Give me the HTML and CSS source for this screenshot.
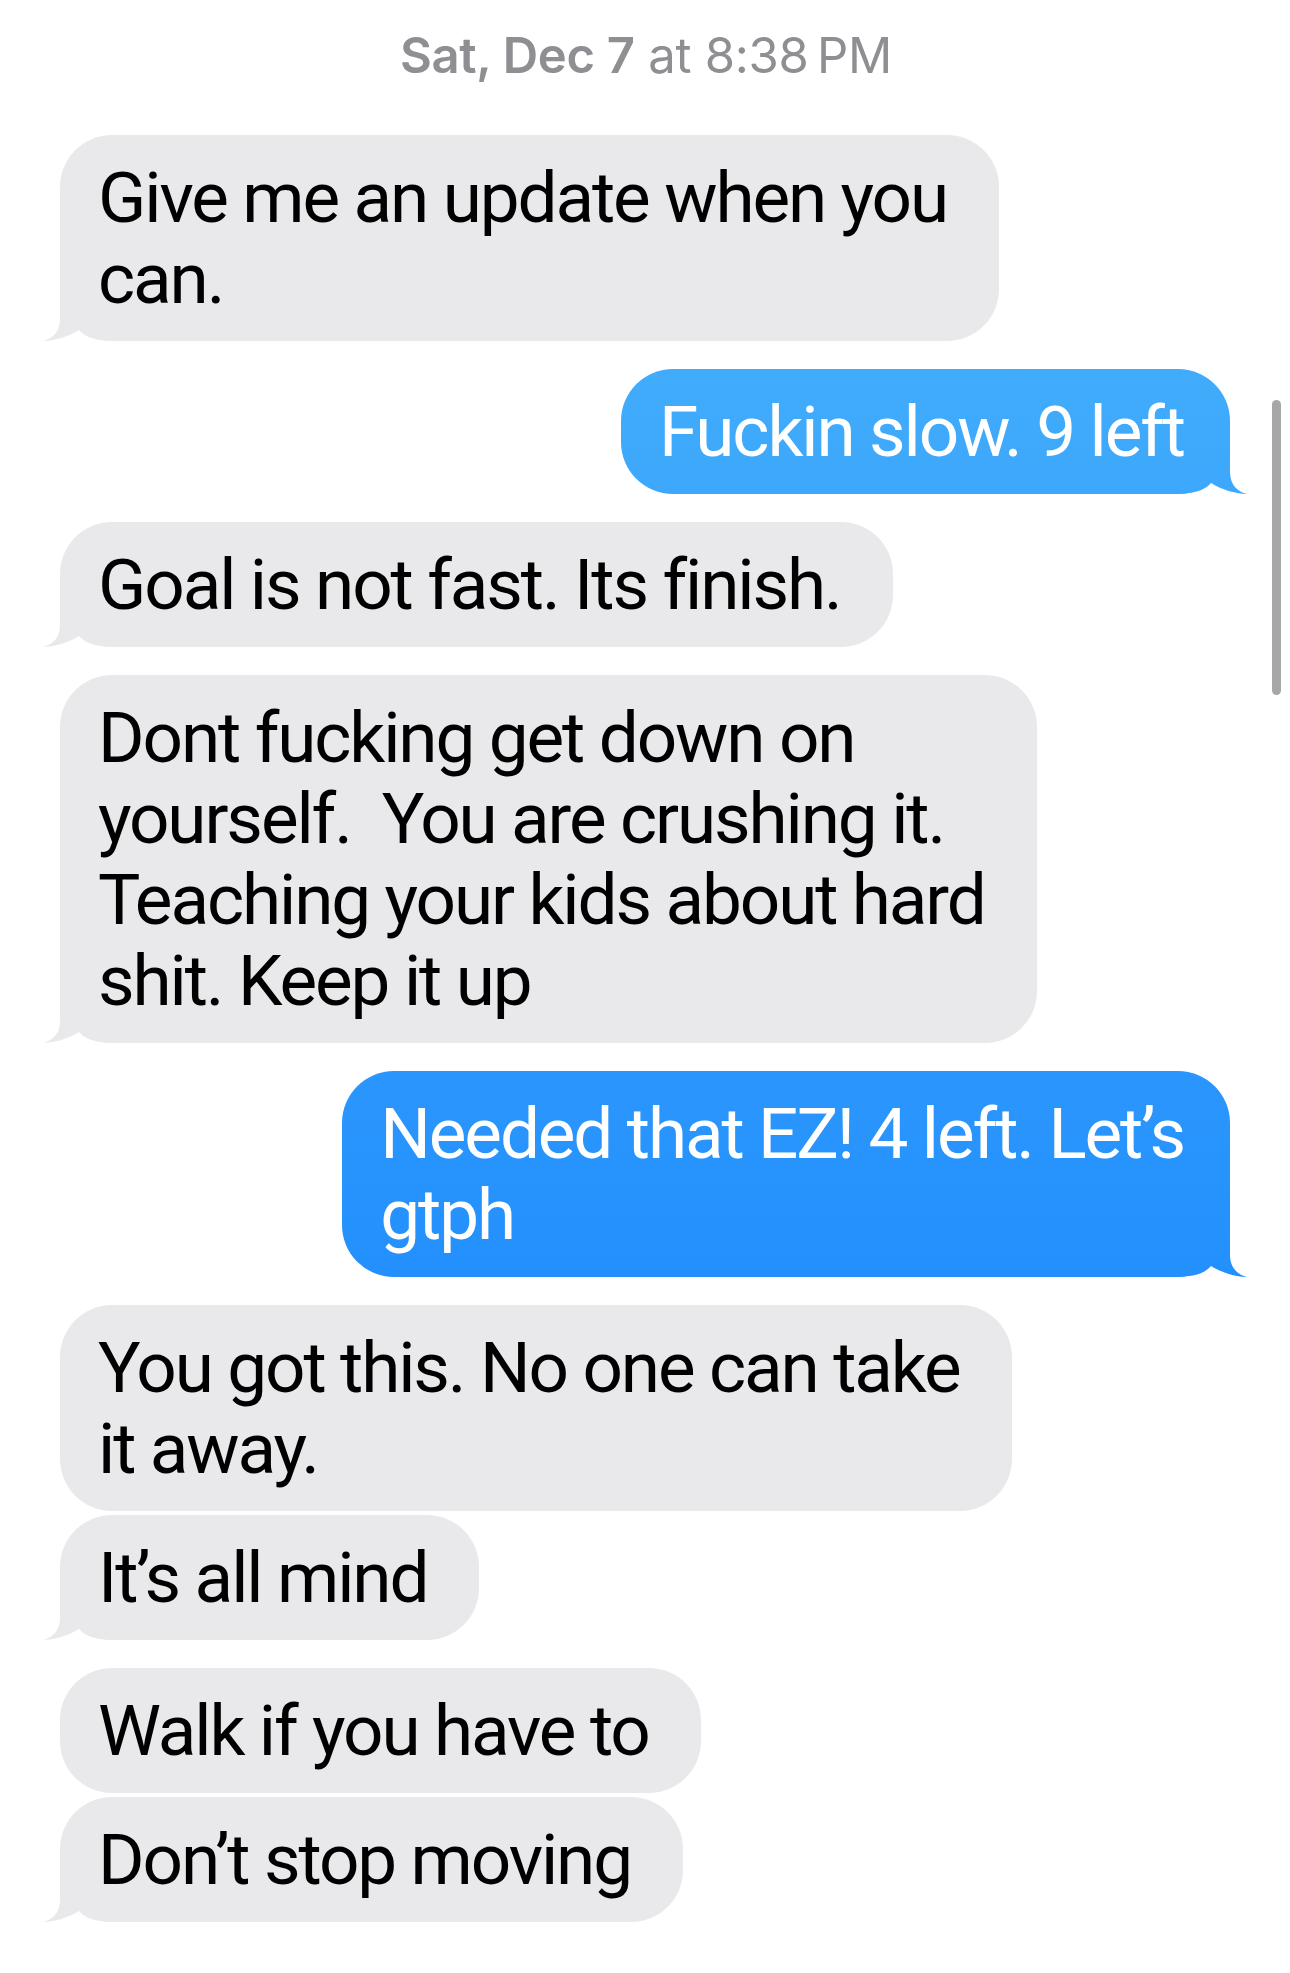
FILE: index.html
```html
<!DOCTYPE html>
<html lang="en">
<head>
<meta charset="utf-8">
<title>Messages</title>
<link rel="stylesheet" href="styles.css">
</head>
<body>
<main class="thread">
  <div class="stamp"><span class="stamp-day">Sat, Dec 7</span> at 8:38&#8239;PM</div>

  <div class="bubble in tailed">Give me an update when you<br>can.<span class="tail"></span></div>
  <div class="bubble out tailed">Fuckin slow. 9 left<span class="tail"></span></div>
  <div class="bubble in tailed">Goal is not fast. Its finish.<span class="tail"></span></div>
  <div class="bubble in tailed">Dont fucking get down on<br>yourself.&nbsp; You are crushing it.<br>Teaching your kids about hard<br>shit. Keep it up<span class="tail"></span></div>
  <div class="bubble out tailed">Needed that EZ! 4 left. Let’s<br>gtph<span class="tail"></span></div>
  <div class="bubble in">You got this. No one can take<br>it away.</div>
  <div class="bubble in tailed cont">It’s all mind<span class="tail"></span></div>
  <div class="bubble in">Walk if you have to</div>
  <div class="bubble in tailed cont">Don’t stop moving<span class="tail"></span></div>

  <div class="scroll-indicator"></div>
</main>
</body>
</html>
```
FILE: styles.css
```css
html, body {
  margin: 0;
  padding: 0;
  background: #ffffff;
}

.thread {
  position: relative;
  width: 1290px;
  height: 1973px;
  box-sizing: border-box;
  padding-top: 26px;
  display: flex;
  flex-direction: column;
  font-family: Inter, "Noto Sans", sans-serif;
  overflow: hidden;
}

.stamp {
  align-self: center;
  font-size: 49px;
  line-height: 60px;
  color: #8e8e93;
  font-weight: 400;
  letter-spacing: -0.3px;
  margin-bottom: 49px;
  padding-left: 2px;
}

.stamp-day {
  font-weight: 600;
}

.bubble {
  position: relative;
  z-index: 0;
  font-family: Roboto, Inter, sans-serif;
  font-size: 71px;
  line-height: 81px;
  padding: 22px 52px 22px 38px;
  border-radius: 52px;
  white-space: nowrap;
  letter-spacing: -2.1px;
}

.bubble + .bubble {
  margin-top: 28px;
}

.bubble + .bubble.cont {
  margin-top: 4px;
}

.in {
  align-self: flex-start;
  margin-left: 60px;
  background: #e9e9eb;
  color: #000000;
}

.out {
  align-self: flex-end;
  margin-right: 60px;
  padding-right: 46px;
  color: #ffffff;
  background: linear-gradient(to bottom, #4db6fb 0px, #0d7bfe 1973px);
  background-attachment: fixed;
}

.tail {
  position: absolute;
  z-index: -1;
  bottom: 0;
  width: 77px;
  height: 60px;
}

.in .tail {
  left: -17px;
  background: #e9e9eb;
  clip-path: path('M 17 0 L 17 38 C 17 51 9 58 0 60 C 10 60 25 56 36 49 C 43 57 53 60 77 60 L 77 0 Z');
}

.out .tail {
  right: -17px;
  background: linear-gradient(to bottom, #4db6fb 0px, #0d7bfe 1973px);
  background-attachment: fixed;
  clip-path: path('M 60 0 L 60 38 C 60 51 68 58 77 60 C 67 60 52 56 41 49 C 34 57 24 60 0 60 L 0 0 Z');
}

.scroll-indicator {
  position: absolute;
  left: 1272px;
  top: 400px;
  width: 9px;
  height: 295px;
  border-radius: 5px;
  background: #a7a7a7;
}
```
